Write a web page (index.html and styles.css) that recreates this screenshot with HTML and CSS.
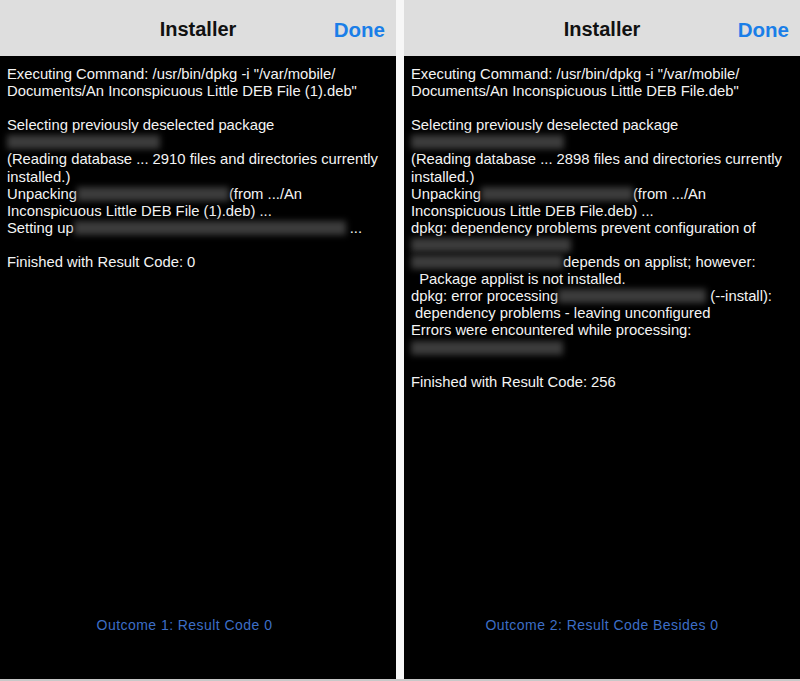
FILE: index.html
```html
<!DOCTYPE html>
<html>
<head>
<meta charset="utf-8">
<link rel="stylesheet" href="styles.css">
</head>
<body>
<div class="screens">
  <section class="panel">
    <header class="bar">
      <span class="title">Installer</span>
      <span class="done">Done</span>
    </header>
    <div class="console">
      <div class="log">
        <div>Executing Command: /usr/bin/dpkg -i "/var/mobile/</div>
        <div>Documents/An Inconspicuous Little DEB File (1).deb"</div>
        <div>&nbsp;</div>
        <div>Selecting previously deselected package</div>
        <div><span class="blur w153"></span></div>
        <div>(Reading database ... 2910 files and directories currently</div>
        <div>installed.)</div>
        <div>Unpacking<span class="blur w152"></span>(from .../An</div>
        <div>Inconspicuous Little DEB File (1).deb) ...</div>
        <div>Setting up<span class="blur w272"></span> ...</div>
        <div>&nbsp;</div>
        <div>Finished with Result Code: 0</div>
      </div>
      <div class="caption left">Outcome 1: Result Code 0</div>
    </div>
  </section>
  <section class="panel">
    <header class="bar">
      <span class="title">Installer</span>
      <span class="done">Done</span>
    </header>
    <div class="console">
      <div class="log">
        <div>Executing Command: /usr/bin/dpkg -i "/var/mobile/</div>
        <div>Documents/An Inconspicuous Little DEB File.deb"</div>
        <div>&nbsp;</div>
        <div>Selecting previously deselected package</div>
        <div><span class="blur w153"></span></div>
        <div>(Reading database ... 2898 files and directories currently</div>
        <div>installed.)</div>
        <div>Unpacking<span class="blur w152"></span>(from .../An</div>
        <div>Inconspicuous Little DEB File.deb) ...</div>
        <div>dpkg: dependency problems prevent configuration of</div>
        <div><span class="blur w160"></span></div>
        <div><span class="blur w152"></span>depends on applist; however:</div>
        <div>&nbsp; Package applist is not installed.</div>
        <div>dpkg: error processing<span class="blur w148"></span> (--install):</div>
        <div>&nbsp;dependency problems - leaving unconfigured</div>
        <div>Errors were encountered while processing:</div>
        <div><span class="blur w152"></span></div>
        <div>&nbsp;</div>
        <div>Finished with Result Code: 256</div>
      </div>
      <div class="caption">Outcome 2: Result Code Besides 0</div>
    </div>
  </section>
</div>
</body>
</html>
```

FILE: styles.css
```css
html, body {
  margin: 0;
  padding: 0;
}
body {
  background: #c8c8c8;
  width: 800px;
  height: 681px;
  overflow: hidden;
  font-family: "Liberation Sans", Arial, sans-serif;
}
.screens {
  display: flex;
  gap: 8px;
  height: 679px;
  background: #f7f7f7;
}
.panel {
  width: 396px;
  display: flex;
  flex-direction: column;
}
.bar {
  height: 56px;
  flex: none;
  background: #dedede;
  display: flex;
  align-items: center;
  justify-content: center;
  position: relative;
}
.title {
  font-size: 20px;
  font-weight: bold;
  color: #111;
  margin-top: 2px;
}
.done {
  position: absolute;
  right: 11px;
  top: 18px;
  font-size: 20.5px;
  font-weight: bold;
  color: #1a7ee8;
}
.console {
  flex: 1;
  background: #000;
  display: flex;
  flex-direction: column;
  justify-content: space-between;
  padding: 10px 0 0 7px;
}
.log {
  color: #f4f4f4;
  font-size: 14.8px;
  line-height: 17.1px;
  white-space: nowrap;
}
.blur {
  display: inline-block;
  height: 14px;
  vertical-align: -2px;
  background: #3c3c3c;
  filter: blur(3px);
}
.w148 { width: 148px; }
.w152 { width: 152px; }
.w153 { width: 153px; }
.w160 { width: 160px; }
.w272 { width: 272px; }
.caption {
  color: #3d6ec6;
  font-size: 14px;
  letter-spacing: 0.45px;
  text-align: center;
  padding: 0 7px 46px 0;
}
.caption.left {
  padding-right: 34px;
}
```
